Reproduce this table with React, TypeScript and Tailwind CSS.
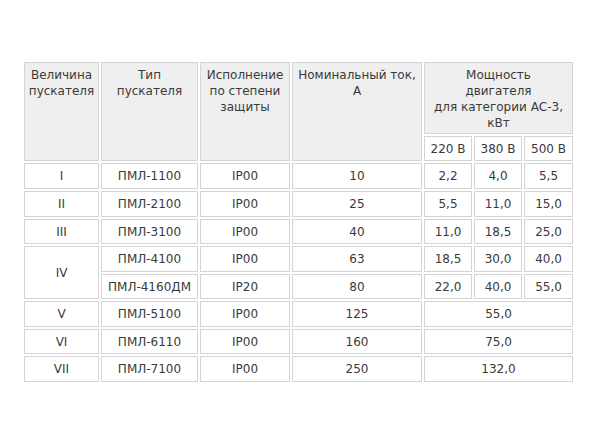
import React from "react";

const th =
  "border border-[#d4d4d4] bg-[#efefef] align-top text-center font-normal px-[2px] pt-[4px] leading-[16px] whitespace-nowrap";
const td =
  "border border-[#d4d4d4] bg-white text-center align-middle p-0 leading-[16px] whitespace-nowrap";

type Row = {
  size?: string;
  span?: number;
  type: string;
  ip: string;
  cur: string;
  p: string[];
  h: string;
};

const rows: Row[] = [
  { size: "I", type: "ПМЛ-1100", ip: "IP00", cur: "10", p: ["2,2", "4,0", "5,5"], h: "h-[26px]" },
  { size: "II", type: "ПМЛ-2100", ip: "IP00", cur: "25", p: ["5,5", "11,0", "15,0"], h: "h-[26px]" },
  { size: "III", type: "ПМЛ-3100", ip: "IP00", cur: "40", p: ["11,0", "18,5", "25,0"], h: "h-[25px]" },
  { size: "IV", span: 2, type: "ПМЛ-4100", ip: "IP00", cur: "63", p: ["18,5", "30,0", "40,0"], h: "h-[26px]" },
  { type: "ПМЛ-4160ДМ", ip: "IP20", cur: "80", p: ["22,0", "40,0", "55,0"], h: "h-[25px]" },
  { size: "V", type: "ПМЛ-5100", ip: "IP00", cur: "125", p: ["55,0"], h: "h-[26px]" },
  { size: "VI", type: "ПМЛ-6110", ip: "IP00", cur: "160", p: ["75,0"], h: "h-[25px]" },
  { size: "VII", type: "ПМЛ-7100", ip: "IP00", cur: "250", p: ["132,0"], h: "h-[26px]" },
];

export default function App() {
  return (
    <div
      className="w-[604px] h-[435px] bg-white text-[#3a3a3a] text-[12px] pt-[60px] pl-[22px]"
      style={{ fontFamily: '"DejaVu Sans", Verdana, sans-serif' }}
    >
      <table className="table-fixed border-separate border-spacing-[2px] w-[553px]">
        <colgroup>
          <col className="w-[75px]" />
          <col className="w-[97px]" />
          <col className="w-[90px]" />
          <col className="w-[130px]" />
          <col className="w-[48px]" />
          <col className="w-[48px]" />
          <col className="w-[49px]" />
        </colgroup>
        <thead>
          <tr className="h-[72px]">
            <th rowSpan={2} className={th}>
              Величина
              <br />
              пускателя
            </th>
            <th rowSpan={2} className={th}>
              Тип
              <br />
              пускателя
            </th>
            <th rowSpan={2} className={th}>
              Исполнение
              <br />
              по степени
              <br />
              защиты
            </th>
            <th rowSpan={2} className={th}>
              Номинальный ток,
              <br />А
            </th>
            <th colSpan={3} className={th}>
              Мощность
              <br />
              двигателя
              <br />
              для категории АС-3,
              <br />
              кВт
            </th>
          </tr>
          <tr className="h-[25px]">
            <th className={td + " font-normal"}>220 В</th>
            <th className={td + " font-normal"}>380 В</th>
            <th className={td + " font-normal"}>500 В</th>
          </tr>
        </thead>
        <tbody>
          {rows.map((r, i) => (
            <tr key={i} className={r.h}>
              {r.size !== undefined && (
                <td rowSpan={r.span ?? 1} className={td}>
                  {r.size}
                </td>
              )}
              <td className={td}>{r.type}</td>
              <td className={td}>{r.ip}</td>
              <td className={td}>{r.cur}</td>
              {r.p.length === 3 ? (
                r.p.map((v, j) => (
                  <td key={j} className={td}>
                    {v}
                  </td>
                ))
              ) : (
                <td colSpan={3} className={td}>
                  {r.p[0]}
                </td>
              )}
            </tr>
          ))}
        </tbody>
      </table>
    </div>
  );
}
